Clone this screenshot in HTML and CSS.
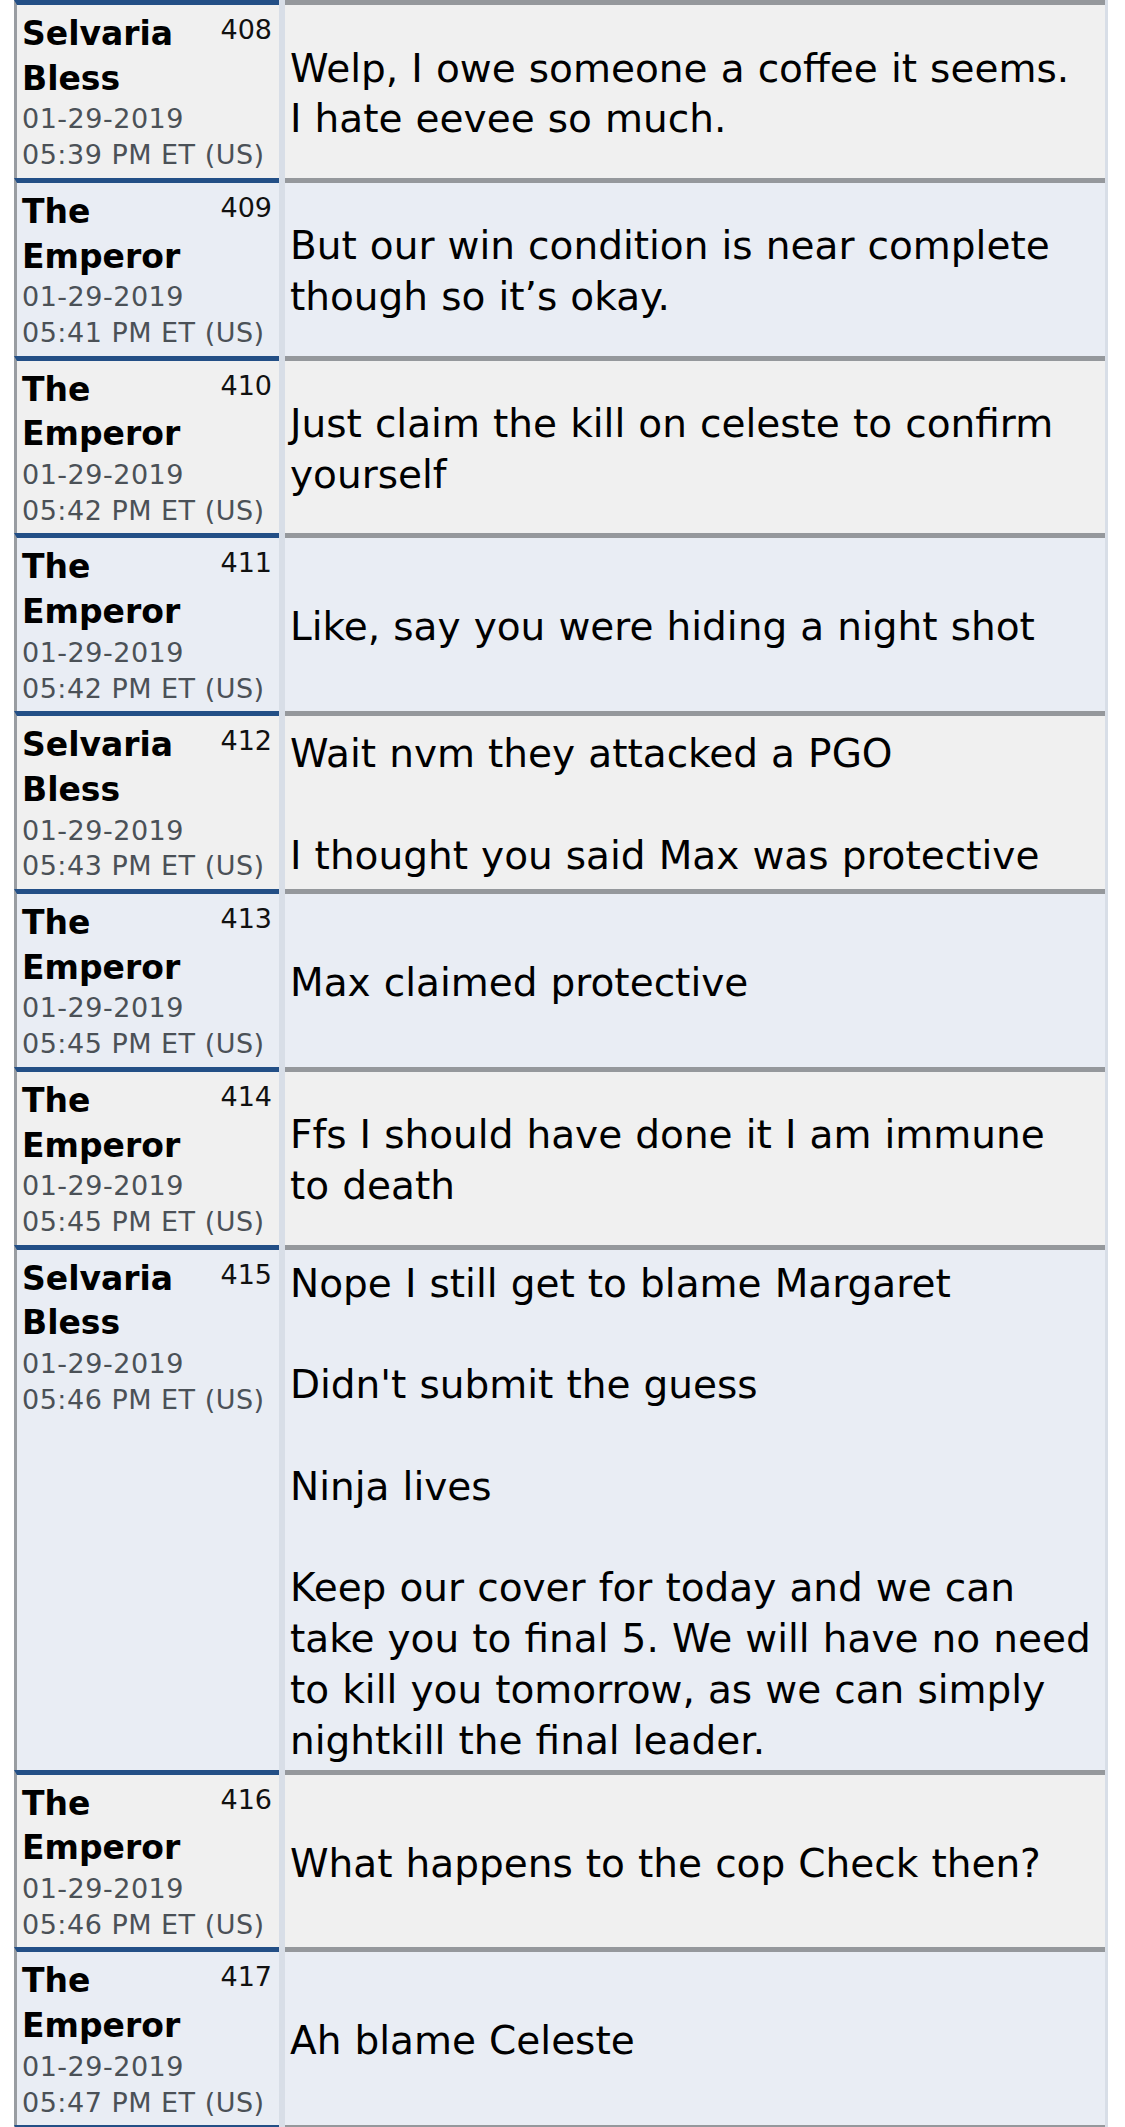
FILE: index.html
```html
<!DOCTYPE html>
<html lang="en">
<head>
<meta charset="utf-8">
<title>Thread</title>
<link rel="stylesheet" href="styles.css">
</head>
<body>
<div class="thread">

  <div class="post alt1">
    <div class="side">
      <span class="num">408</span>
      <div class="name">Selvaria Bless</div>
      <div class="date">01-29-2019<br>05:39 PM ET (US)</div>
    </div>
    <div class="body"><div class="msg">Welp, I owe someone a coffee it seems.<br>I hate eevee so much.</div></div>
  </div>

  <div class="post alt2">
    <div class="side">
      <span class="num">409</span>
      <div class="name">The Emperor</div>
      <div class="date">01-29-2019<br>05:41 PM ET (US)</div>
    </div>
    <div class="body"><div class="msg">But our win condition is near complete though so it’s okay.</div></div>
  </div>

  <div class="post alt1">
    <div class="side">
      <span class="num">410</span>
      <div class="name">The Emperor</div>
      <div class="date">01-29-2019<br>05:42 PM ET (US)</div>
    </div>
    <div class="body"><div class="msg">Just claim the kill on celeste to confirm yourself</div></div>
  </div>

  <div class="post alt2">
    <div class="side">
      <span class="num">411</span>
      <div class="name">The Emperor</div>
      <div class="date">01-29-2019<br>05:42 PM ET (US)</div>
    </div>
    <div class="body"><div class="msg">Like, say you were hiding a night shot</div></div>
  </div>

  <div class="post alt1">
    <div class="side">
      <span class="num">412</span>
      <div class="name">Selvaria Bless</div>
      <div class="date">01-29-2019<br>05:43 PM ET (US)</div>
    </div>
    <div class="body"><div class="msg">Wait nvm they attacked a PGO<br><br>I thought you said Max was protective</div></div>
  </div>

  <div class="post alt2">
    <div class="side">
      <span class="num">413</span>
      <div class="name">The Emperor</div>
      <div class="date">01-29-2019<br>05:45 PM ET (US)</div>
    </div>
    <div class="body"><div class="msg">Max claimed protective</div></div>
  </div>

  <div class="post alt1">
    <div class="side">
      <span class="num">414</span>
      <div class="name">The Emperor</div>
      <div class="date">01-29-2019<br>05:45 PM ET (US)</div>
    </div>
    <div class="body"><div class="msg">Ffs I should have done it I am immune<br>to death</div></div>
  </div>

  <div class="post alt2">
    <div class="side">
      <span class="num">415</span>
      <div class="name">Selvaria Bless</div>
      <div class="date">01-29-2019<br>05:46 PM ET (US)</div>
    </div>
    <div class="body"><div class="msg">Nope I still get to blame Margaret<br><br>Didn't submit the guess<br><br>Ninja lives<br><br>Keep our cover for today and we can take you to final 5. We will have no need to kill you tomorrow, as we can simply nightkill the final leader.</div></div>
  </div>

  <div class="post alt1">
    <div class="side">
      <span class="num">416</span>
      <div class="name">The Emperor</div>
      <div class="date">01-29-2019<br>05:46 PM ET (US)</div>
    </div>
    <div class="body"><div class="msg">What happens to the cop Check then?</div></div>
  </div>

  <div class="post alt2">
    <div class="side">
      <span class="num">417</span>
      <div class="name">The Emperor</div>
      <div class="date">01-29-2019<br>05:47 PM ET (US)</div>
    </div>
    <div class="body"><div class="msg">Ah blame Celeste</div></div>
  </div>

  <div class="post alt1 tail">
    <div class="side"></div>
    <div class="body"></div>
  </div>

</div>
</body>
</html>
```
FILE: styles.css
```css
html, body {
  margin: 0;
  padding: 0;
  background: #ffffff;
}

body {
  font-family: "DejaVu Sans", Verdana, sans-serif;
  color: #000000;
}

.thread {
  margin-left: 14px;
  width: 1094px;
  background: #d8dee7;
}

.post {
  display: grid;
  grid-template-columns: 265px 820px;
  column-gap: 6px;
  padding-right: 3px;
}

.side {
  border-top: 5px solid #234f86;
  border-left: 3px solid #999da2;
  padding: 7px 7px 5px 5px;
}

.body {
  border-top: 5px solid #95989c;
  display: flex;
  align-items: center;
  padding: 9px 6px 3px 5px;
}

.alt1 .side,
.alt1 .body {
  background: #f0f0f0;
}

.alt2 .side,
.alt2 .body {
  background: #e9edf4;
}

.num {
  float: right;
  font-size: 27px;
  line-height: 36px;
  color: #111111;
}

.name {
  font-size: 33px;
  line-height: 44.7px;
  font-weight: bold;
  color: #000000;
}

.date {
  font-size: 27px;
  line-height: 35.7px;
  letter-spacing: 0.5px;
  color: #4b5157;
}

.msg {
  font-size: 39px;
  line-height: 50.8px;
  word-spacing: 0.7px;
  color: #000000;
}

.tail .side,
.tail .body {
  min-height: 160px;
}
```
